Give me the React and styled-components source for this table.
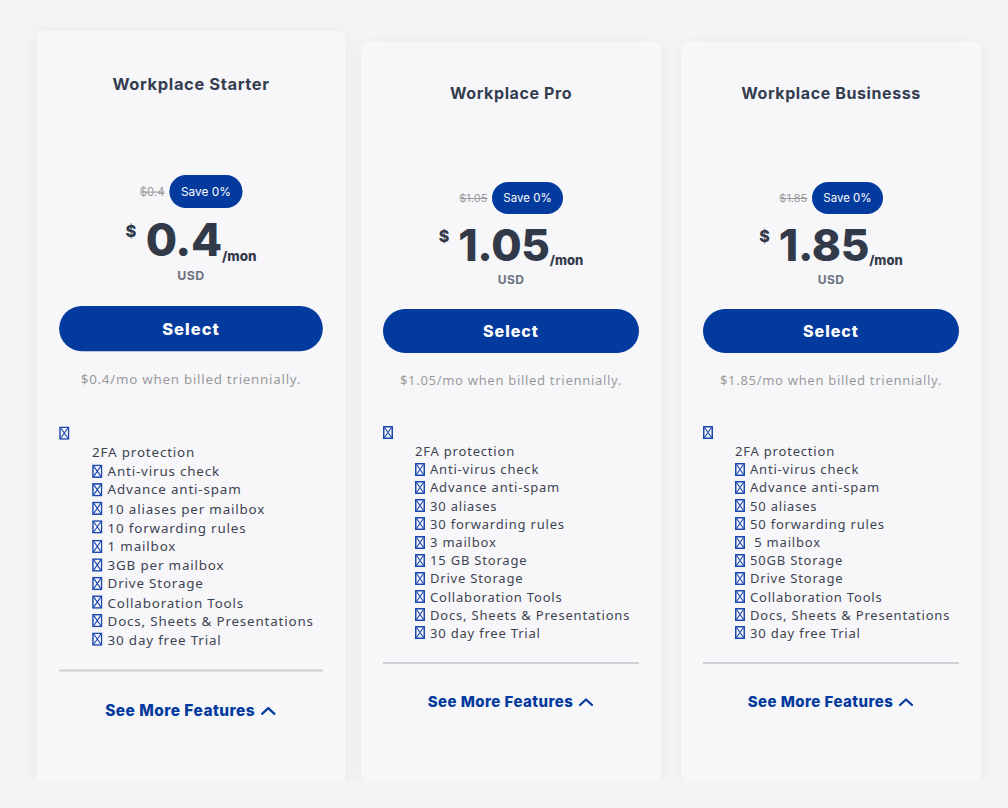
import React from 'react';
import styled, { createGlobalStyle } from 'styled-components';

const GlobalStyle = createGlobalStyle`
  body {
    margin: 0;
    background: #f4f4f7;
    font-family: Inter, "Noto Sans", sans-serif;
  }
`;

const BLUE = '#023a9e';

const plans = [
  {
    name: 'Workplace Starter',
    price: '0.4',
    features: [
      'Anti-virus check',
      'Advance anti-spam',
      '10 aliases per mailbox',
      '10 forwarding rules',
      '1 mailbox',
      '3GB per mailbox',
      'Drive Storage',
      'Collaboration Tools',
      'Docs, Sheets & Presentations',
      '30 day free Trial',
    ],
    featured: true,
  },
  {
    name: 'Workplace Pro',
    price: '1.05',
    features: [
      'Anti-virus check',
      'Advance anti-spam',
      '30 aliases',
      '30 forwarding rules',
      '3 mailbox',
      '15 GB Storage',
      'Drive Storage',
      'Collaboration Tools',
      'Docs, Sheets & Presentations',
      '30 day free Trial',
    ],
  },
  {
    name: 'Workplace Businesss',
    price: '1.85',
    features: [
      'Anti-virus check',
      'Advance anti-spam',
      '50 aliases',
      '50 forwarding rules',
      ' 5 mailbox',
      '50GB Storage',
      'Drive Storage',
      'Collaboration Tools',
      'Docs, Sheets & Presentations',
      '30 day free Trial',
    ],
  },
];

const Page = styled.div`
  display: flex;
  gap: 20px;
  padding: 42px 0 0 41px;
  align-items: flex-start;
`;

const Card = styled.div`
  width: 300px;
  box-sizing: border-box;
  padding: 40px 22px 69px;
  background: #f7f7fa;
  border-radius: 6px;
  box-shadow: 0 2px 14px rgba(0, 0, 0, 0.05);
  display: flex;
  flex-direction: column;
  align-items: stretch;
  transform: ${(p) => (p.$featured ? 'scale(1.03)' : 'none')};
`;

const Title = styled.h3`
  margin: 0;
  text-align: center;
  font-size: 16px;
  line-height: 22px;
  font-weight: 700;
  letter-spacing: 0.6px;
  color: #333d4f;
`;

const SaveRow = styled.div`
  margin-top: 78px;
  display: flex;
  justify-content: center;
  align-items: center;
  gap: 5px;
`;

const OldPrice = styled.span`
  font-size: 11px;
  color: #9a9a9a;
  text-decoration: line-through;
`;

const Badge = styled.span`
  height: 32px;
  padding: 0 11px;
  display: inline-flex;
  align-items: center;
  border-radius: 16px;
  background: ${BLUE};
  color: #fff;
  font-size: 11.5px;
`;

const PriceRow = styled.div`
  margin-top: 8px;
  display: flex;
  justify-content: center;
  align-items: flex-start;
  color: #323a4a;
  font-weight: 800;
`;

const Currency = styled.span`
  font-size: 16px;
  line-height: 20px;
  margin: 4px 9px 0 0;
`;

const Amount = styled.span`
  font-size: 44px;
  line-height: 46px;
  letter-spacing: -0.3px;
`;

const Period = styled.span`
  font-size: 13px;
  align-self: flex-end;
  line-height: 13px;
  margin-bottom: 1px;
`;

const CurrencyCode = styled.div`
  margin-top: 3px;
  text-align: center;
  font-size: 12px;
  line-height: 18px;
  font-weight: 700;
  letter-spacing: 0.4px;
  color: #6b7280;
`;

const SelectButton = styled.button`
  margin-top: 20px;
  height: 44px;
  border: none;
  border-radius: 22px;
  background: ${BLUE};
  color: #fff;
  font-family: inherit;
  font-size: 16px;
  font-weight: 800;
  letter-spacing: 1px;
  cursor: pointer;
`;

const Billed = styled.div`
  margin-top: 18px;
  text-align: center;
  font-family: "Noto Sans", sans-serif;
  font-size: 13px;
  line-height: 18px;
  letter-spacing: 0.7px;
  color: #9a9a9a;
`;

const Features = styled.ul`
  list-style: none;
  margin: 37px 0 0;
  padding: 0;
  font-family: "Noto Sans", sans-serif;
  font-size: 13px;
  letter-spacing: 0.8px;
  color: #3d4451;
`;

const LoneIcon = styled.li`
  height: 13px;
  line-height: 13px;
`;

const SubList = styled.ul`
  list-style: none;
  margin: 3px 0 0;
  padding: 0 0 0 32px;
`;

const Feature = styled.li`
  display: flex;
  align-items: center;
  gap: 5px;
  height: 18.2px;
  white-space: pre;
`;

const Divider = styled.hr`
  margin: 20px 0 0;
  border: none;
  height: 2px;
  background: #cfcfd3;
`;

const MoreLink = styled.a`
  margin-top: 28px;
  display: flex;
  justify-content: center;
  align-items: center;
  gap: 5px;
  color: ${BLUE};
  font-size: 15px;
  line-height: 20px;
  font-weight: 800;
  letter-spacing: 0.45px;
  text-decoration: none;
  cursor: pointer;
`;

const BoxIcon = () => (
  <svg width="10" height="13" viewBox="0 0 10 13" style={{ flex: '0 0 auto', display: 'inline-block' }}>
    <rect x="0.75" y="0.75" width="8.5" height="11.5" fill="none" stroke="#1a47b0" strokeWidth="1.5" />
    <path d="M1.5 1.5 L8.5 11.5 M8.5 1.5 L1.5 11.5" stroke="#1a47b0" strokeWidth="1.1" />
  </svg>
);

const Chevron = () => (
  <svg width="16" height="10" viewBox="0 0 16 10">
    <path d="M2 8 L8 2.5 L14 8" fill="none" stroke={BLUE} strokeWidth="2.2" strokeLinecap="round" strokeLinejoin="round" />
  </svg>
);

const PlanCard = ({ plan }) => (
  <Card $featured={plan.featured}>
    <Title>{plan.name}</Title>
    <SaveRow>
      <OldPrice>${plan.price}</OldPrice>
      <Badge>Save 0%</Badge>
    </SaveRow>
    <PriceRow>
      <Currency>$</Currency>
      <Amount>{plan.price}</Amount>
      <Period>/mon</Period>
    </PriceRow>
    <CurrencyCode>USD</CurrencyCode>
    <SelectButton>Select</SelectButton>
    <Billed>${plan.price}/mo when billed triennially.</Billed>
    <Features>
      <LoneIcon>
        <BoxIcon />
      </LoneIcon>
      <li>
        <SubList>
          <Feature>2FA protection</Feature>
          {plan.features.map((f) => (
            <Feature key={f}>
              <BoxIcon />
              {f}
            </Feature>
          ))}
        </SubList>
      </li>
    </Features>
    <Divider />
    <MoreLink>
      See More Features <Chevron />
    </MoreLink>
  </Card>
);

export default function App() {
  return (
    <>
      <GlobalStyle />
      <Page>
        {plans.map((p) => (
          <PlanCard key={p.name} plan={p} />
        ))}
      </Page>
    </>
  );
}
